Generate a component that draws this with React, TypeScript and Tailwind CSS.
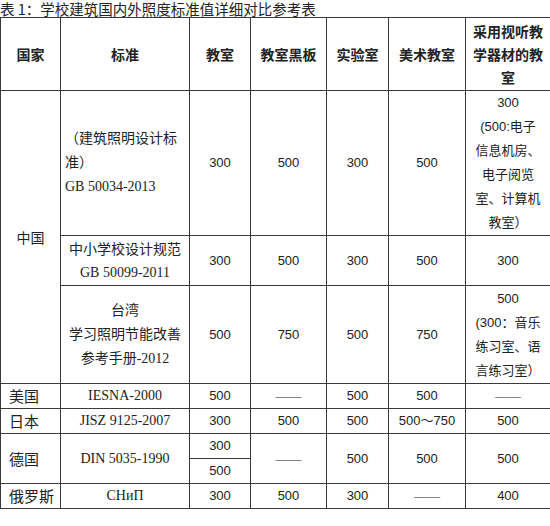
const cell = "border border-[#3a3a3a] text-center align-middle p-0";

const App = () => {
  return (
    <div className="w-[550px] h-[526px] bg-white text-[#222] font-['Liberation_Sans','Noto_Sans_CJK_SC',sans-serif]">
      <p className="h-[17px] text-[14.5px] leading-[17px] font-['Noto_Sans_CJK_SC',sans-serif] whitespace-nowrap">
        表 1：学校建筑国内外照度标准值详细对比参考表
      </p>
      <table className="table-fixed w-[550px] border-collapse text-[13px] leading-[24px]">
        <colgroup>
          <col className="w-[60px]" />
          <col className="w-[129px]" />
          <col className="w-[61px]" />
          <col className="w-[76px]" />
          <col className="w-[62px]" />
          <col className="w-[77px]" />
          <col className="w-[85px]" />
        </colgroup>
        <thead>
          <tr className="h-[73px] font-['Noto_Sans_CJK_SC',sans-serif] font-bold text-[14px] leading-[23px]">
            <th className={cell}>国家</th>
            <th className={cell}>标准</th>
            <th className={cell}>教室</th>
            <th className={cell}>教室黑板</th>
            <th className={cell}>实验室</th>
            <th className={cell}>美术教室</th>
            <th className={`${cell} px-[6px]`}>采用视听教学器材的教室</th>
          </tr>
        </thead>
        <tbody>
          <tr className="h-[145px]">
            <td rowSpan={3} className={`${cell} text-[14px] font-['Noto_Sans_CJK_SC',sans-serif]`}>中国</td>
            <td className={`${cell} text-left pl-[4px] text-[14px] whitespace-nowrap font-['Liberation_Serif','Noto_Sans_CJK_SC',serif]`}>
              （建筑照明设计标
              <br />
              准）
              <br />
              GB 50034-2013
            </td>
            <td className={cell}>300</td>
            <td className={cell}>500</td>
            <td className={cell}>300</td>
            <td className={cell}>500</td>
            <td className={`${cell} whitespace-nowrap`}>
              300
              <br />
              (500:电子
              <br />
              信息机房、
              <br />
              电子阅览
              <br />
              室、计算机
              <br />
              教室）
            </td>
          </tr>
          <tr className="h-[50px]">
            <td className={`${cell} leading-[23px] text-[14px] whitespace-nowrap font-['Liberation_Serif','Noto_Sans_CJK_SC',serif]`}>
              中小学校设计规范
              <br />
              GB 50099-2011
            </td>
            <td className={cell}>300</td>
            <td className={cell}>500</td>
            <td className={cell}>300</td>
            <td className={cell}>500</td>
            <td className={cell}>300</td>
          </tr>
          <tr className="h-[98px]">
            <td className={`${cell} text-[14px] whitespace-nowrap font-['Liberation_Serif','Noto_Sans_CJK_SC',serif]`}>
              台湾
              <br />
              学习照明节能改善
              <br />
              参考手册-2012
            </td>
            <td className={cell}>500</td>
            <td className={cell}>750</td>
            <td className={cell}>500</td>
            <td className={cell}>750</td>
            <td className={`${cell} whitespace-nowrap`}>
              500
              <br />
              (300：音乐
              <br />
              练习室、语
              <br />
              言练习室）
            </td>
          </tr>
          <tr className="h-[24px]">
            <td className={`${cell} text-left pl-[8px] text-[15px] leading-[22px] font-['Noto_Sans_CJK_SC',sans-serif]`}>美国</td>
            <td className={`${cell} text-[14px] leading-[22px] font-['Liberation_Serif',serif]`}>IESNA-2000</td>
            <td className={cell}>500</td>
            <td className={`${cell} font-['Liberation_Serif',serif]`}>——</td>
            <td className={cell}>500</td>
            <td className={cell}>500</td>
            <td className={`${cell} font-['Liberation_Serif',serif]`}>——</td>
          </tr>
          <tr className="h-[25px]">
            <td className={`${cell} text-left pl-[8px] text-[15px] leading-[22px] font-['Noto_Sans_CJK_SC',sans-serif]`}>日本</td>
            <td className={`${cell} text-[14px] leading-[22px] font-['Liberation_Serif',serif]`}>JISZ 9125-2007</td>
            <td className={cell}>300</td>
            <td className={cell}>500</td>
            <td className={cell}>500</td>
            <td className={cell}>500～750</td>
            <td className={cell}>500</td>
          </tr>
          <tr className="h-[25px]">
            <td rowSpan={2} className={`${cell} text-left pl-[8px] text-[15px] font-['Noto_Sans_CJK_SC',sans-serif]`}>德国</td>
            <td rowSpan={2} className={`${cell} text-[14px] font-['Liberation_Serif',serif]`}>DIN 5035-1990</td>
            <td className={cell}>300</td>
            <td rowSpan={2} className={`${cell} font-['Liberation_Serif',serif]`}>——</td>
            <td rowSpan={2} className={cell}>500</td>
            <td rowSpan={2} className={cell}>500</td>
            <td rowSpan={2} className={cell}>500</td>
          </tr>
          <tr className="h-[25px]">
            <td className={cell}>500</td>
          </tr>
          <tr className="h-[25px]">
            <td className={`${cell} text-left pl-[8px] text-[15px] leading-[22px] font-['Noto_Sans_CJK_SC',sans-serif]`}>俄罗斯</td>
            <td className={`${cell} text-[14px] leading-[22px] font-['Liberation_Serif',serif]`}>СНиП</td>
            <td className={cell}>300</td>
            <td className={cell}>500</td>
            <td className={cell}>300</td>
            <td className={`${cell} font-['Liberation_Serif',serif]`}>——</td>
            <td className={cell}>400</td>
          </tr>
        </tbody>
      </table>
    </div>
  );
};

export default App;
